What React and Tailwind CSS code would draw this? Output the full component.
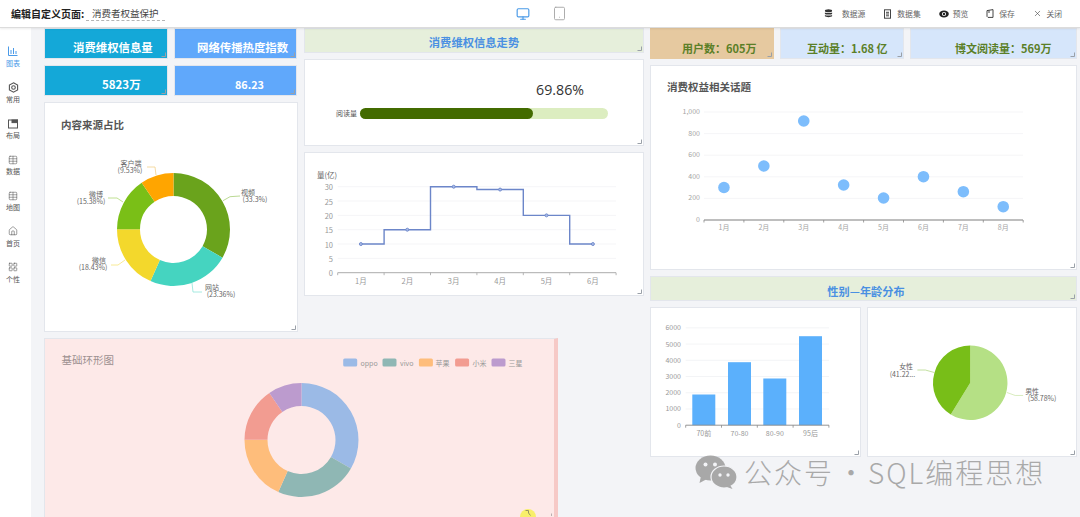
import React from 'react';
import { Table, House, LayoutGrid, Monitor, Tablet, X } from 'lucide-react';

const pt = (cx, cy, r, a) => [cx + r * Math.sin(a), cy - r * Math.cos(a)];
function Ring({ cx, cy, r, ir, data }) {
  const total = data.reduce((s, d) => s + d[0], 0);
  let acc = 0;
  return data.map(([v, c], i) => {
    const a0 = (acc / total) * Math.PI * 2;
    acc += v;
    const a1 = (acc / total) * Math.PI * 2;
    const big = a1 - a0 > Math.PI ? 1 : 0;
    const [x0, y0] = pt(cx, cy, r, a0);
    const [x1, y1] = pt(cx, cy, r, a1);
    const [x2, y2] = pt(cx, cy, ir, a1);
    const [x3, y3] = pt(cx, cy, ir, a0);
    const d = ir > 0
      ? `M${x0} ${y0}A${r} ${r} 0 ${big} 1 ${x1} ${y1}L${x2} ${y2}A${ir} ${ir} 0 ${big} 0 ${x3} ${y3}Z`
      : `M${cx} ${cy}L${x0} ${y0}A${r} ${r} 0 ${big} 1 ${x1} ${y1}Z`;
    return <path key={i} d={d} fill={c} />;
  });
}

const Handle = () => (
  <svg width="5" height="5" viewBox="0 0 5 5" className="absolute right-[1px] bottom-[1px]">
    <path d="M4.5 0.5V4.5H0.5" fill="none" stroke="#9aa0a8" strokeWidth="1" />
  </svg>
);

function Card({ className = '', children }) {
  return <div className={`relative shrink-0 border border-[#e3e6ec] ${className}`}>{children}<Handle /></div>;
}

function Plot({ x, y, w, h, children }) {
  return <svg viewBox={`${x + 1} ${y + 1} ${w - 2} ${h - 2}`} className="block w-full h-full">{children}</svg>;
}

const T = ({ x, y, s = 7.5, c = '#666', a = 'middle', w, children }) => (
  <text x={x} y={y} fontSize={s} fill={c} textAnchor={a} fontWeight={w} dominantBaseline="central">{children}</text>
);

const IconBars = () => (
  <svg width="10" height="10" viewBox="0 0 10 10" fill="none" stroke="currentColor" strokeWidth="1">
    <path d="M0.5 0.5V9.5H9.5" />
    <path d="M3 8V4M5.5 8V2M8 8V5" />
  </svg>
);
const IconGear = () => (
  <svg width="11" height="11" viewBox="0 0 11 11" fill="none" stroke="currentColor" strokeWidth="1.1">
    <path d="M5.5 0.8L9.6 3.1V7.9L5.5 10.2L1.4 7.9V3.1Z" />
    <circle cx="5.5" cy="5.5" r="1.8" />
  </svg>
);
const IconLayout = () => (
  <svg width="10" height="10" viewBox="0 0 10 10" fill="none" stroke="currentColor" strokeWidth="1">
    <rect x="0.5" y="1" width="9" height="8" />
    <rect x="4" y="1" width="5.5" height="2.6" fill="currentColor" />
  </svg>
);
const IconTable = () => <Table size={10} strokeWidth={1.3} />;
const IconHome = () => <House size={10} strokeWidth={1.4} />;
const IconGrid = () => <LayoutGrid size={10} strokeWidth={1.4} />;

const IconDb = () => (
  <svg width="9" height="9" viewBox="0 0 9 9" fill="#333">
    <ellipse cx="4.5" cy="1.8" rx="3.6" ry="1.5" />
    <path d="M0.9 3.5c.8.8 6.4.8 7.2 0v1.4c-.8.9-6.4.9-7.2 0z" />
    <path d="M0.9 6c.8.8 6.4.8 7.2 0v1.3c-.8 1.1-6.4 1.1-7.2 0z" />
  </svg>
);
const IconSet = () => (
  <svg width="9" height="10" viewBox="0 0 9 10" fill="none" stroke="#444" strokeWidth="1">
    <rect x="1.5" y="0.8" width="6" height="8.4" />
    <path d="M3 3.3H6M3 5H6M3 6.8H6" />
  </svg>
);
const IconEye = () => (
  <svg width="10" height="8" viewBox="0 0 10 8">
    <ellipse cx="5" cy="4" rx="4.8" ry="3.4" fill="#222" />
    <circle cx="5" cy="4" r="2.1" fill="#fff" />
    <circle cx="5" cy="4" r="1.2" fill="#222" />
  </svg>
);
const IconSave = () => (
  <svg width="8" height="9" viewBox="0 0 8 9" fill="none" stroke="#444" strokeWidth="1">
    <path d="M1 1.6L7 0.6V8.4H2L1 7.4Z" />
    <path d="M3 1.4V4" />
  </svg>
);
const IconX = () => <X size={9} strokeWidth={1.6} className="text-[#444]" />;

const side = [
  [IconBars, '图表', true],
  [IconGear, '常用'],
  [IconLayout, '布局'],
  [IconTable, '数据'],
  [IconTable, '地图'],
  [IconHome, '首页'],
  [IconGrid, '个性'],
];
const actions = [
  [IconDb, '数据源', 'gap-[8.5px]'],
  [IconSet, '数据集', 'gap-[5px]'],
  [IconEye, '预览', 'gap-[4px]'],
  [IconSave, '保存', 'gap-[5px]'],
  [IconX, '关闭', 'gap-[4.5px]'],
];

function Stat({ className, children }) {
  return <Card className={`h-[31px] flex items-end pb-[2px] font-bold ${className}`}>{children}</Card>;
}

const Label = ({ lines, x, y, line }) => (
  <g>
    <polyline points={line[0]} fill="none" stroke={line[1]} strokeWidth="0.8" />
    <text fontSize={7} fill="#666" textAnchor="middle" dominantBaseline="central">
      <tspan x={x[0]} y={y - 0.5}>{lines[0]}</tspan>
      <tspan x={x[1]} y={y + 7}>{lines[1]}</tspan>
    </text>
  </g>
);

function SourceChart() {
  return (
    <Plot x={44} y={102} w={254} h={230}>
      <T x={61} y={124} s={10.5} c="#555" a="start" w="700">内容来源占比</T>
      <Ring cx={173.5} cy={229.5} r={56.5} ir={33.5} data={[[33.3, '#6aa31c'], [23.36, '#45d4c0'], [18.43, '#f3d82c'], [15.38, '#7abf17'], [9.53, '#ffa500']]} />
      <Label lines={['视频', '(33.3%)']} x={[248, 255]} y={192} line={['223,200.7 230,196.7 240,196', '#a9cf79']} />
      <Label lines={['网站', '(23.36%)']} x={[212, 221]} y={287} line={['192,283 193,292 202,292', '#8fe5d9']} />
      <Label lines={['微信', '(18.43%)']} x={[99, 93]} y={260} line={['125,260 118,265 111,265', '#f6e57c']} />
      <Label lines={['微博', '(15.38%)']} x={[96, 91]} y={194} line={['123,202 117,198 108,198', '#b0d976']} />
      <Label lines={['客户端', '(9.53%)']} x={[131, 130]} y={163} line={['156,175 155,167 147,167', '#f3d28d']} />
    </Plot>
  );
}

function StepChart() {
  const x0 = 337.7, band = 46.4, y0 = 272.7, k = 86 / 30;
  const vals = [10, 15, 30, 29, 20, 10];
  const Y = (v) => y0 - v * k;
  let d = `M${x0 + band / 2} ${Y(10)}`;
  vals.forEach((v, i) => {
    if (i > 0) d += `V${Y(v)}`;
    d += `H${x0 + band * (i + (i === vals.length - 1 ? 0.5 : 1))}`;
  });
  return (
    <Plot x={304} y={152} w={340} h={144}>
      <T x={327} y={174} s={7.5} c="#666">量(亿)</T>
      {[5, 10, 15, 20, 25, 30].map((v) => <line key={v} x1={x0} x2={616} y1={Y(v)} y2={Y(v)} stroke="#f2f3f5" strokeWidth="0.8" />)}
      {[0, 5, 10, 15, 20, 25, 30].map((v) => <T key={v} x={333} y={Y(v)} s={7.5} c="#999" a="end">{v}</T>)}
      <line x1={x0} x2={616} y1={y0} y2={y0} stroke="#a3a3a3" strokeWidth="0.9" />
      {[0, 1, 2, 3, 4, 5, 6].map((i) => <line key={i} x1={x0 + band * i} x2={x0 + band * i} y1={y0} y2={y0 + 2.5} stroke="#a3a3a3" strokeWidth="0.8" />)}
      {vals.map((_, i) => <T key={i} x={x0 + band * (i + 0.5)} y={280} s={7.5} c="#999">{i + 1}月</T>)}
      <path d={d} fill="none" stroke="#6c86c9" strokeWidth="1.4" />
      {vals.map((v, i) => <circle key={i} cx={x0 + band * (i + 0.5)} cy={Y(v)} r="1.5" fill="#a9bce6" stroke="#6c86c9" strokeWidth="0.9" />)}
    </Plot>
  );
}

function ScatterChart() {
  const x0 = 704, band = 39.9, y0 = 220, unit = 21.6;
  const ys = [187.5, 166, 121, 185, 198, 176.7, 191.7, 206.7];
  return (
    <Plot x={650} y={65} w={427} h={205}>
      <T x={667} y={86} s={10.5} c="#555" a="start" w="700">消费权益相关话题</T>
      {[1, 2, 3, 4, 5].map((i) => <line key={i} x1={x0} x2={1023} y1={y0 - unit * i} y2={y0 - unit * i} stroke="#f2f3f5" strokeWidth="0.8" />)}
      {['0', '200', '400', '600', '800', '1,000'].map((l, i) => <T key={l} x={700} y={y0 - unit * i - 1} s={7} c="#a5a5a5" a="end">{l}</T>)}
      <line x1={x0} x2={1023} y1={y0} y2={y0} stroke="#a8a8a8" strokeWidth="1.4" />
      {Array.from({ length: 9 }).map((_, i) => <line key={i} x1={x0 + band * i} x2={x0 + band * i} y1={y0} y2={y0 + 2.5} stroke="#888" strokeWidth="0.8" />)}
      {ys.map((_, i) => <T key={i} x={x0 + band * (i + 0.5)} y={227} s={7} c="#a5a5a5">{i + 1}月</T>)}
      {ys.map((y, i) => <circle key={i} cx={x0 + band * (i + 0.5)} cy={y} r="5.8" fill="#7dbdfc" />)}
    </Plot>
  );
}

function BarChart() {
  const x0 = 685.7, x1 = 829, y0 = 425.7, unit = 16.23;
  const bars = [[692.3, 395, '70前'], [728, 362.7, '70-80'], [763.3, 379, '80-90'], [799, 336.7, '95后']];
  return (
    <Plot x={650} y={307.5} w={211} h={150}>
      {[1, 2, 3, 4, 5, 6].map((i) => <line key={i} x1={x0} x2={x1} y1={y0 - unit * i} y2={y0 - unit * i} stroke="#f0f1f4" strokeWidth="0.8" />)}
      {[0, 1000, 2000, 3000, 4000, 5000, 6000].map((v, i) => <T key={v} x={681} y={y0 - unit * i - 0.5} s={7} c="#999" a="end">{v}</T>)}
      {bars.map(([x, t]) => <rect key={x} x={x} y={t} width={23} height={y0 - t} fill="#5bb0fc" />)}
      <line x1={x0} x2={x1} y1={y0} y2={y0} stroke="#888" strokeWidth="0.9" />
      {[0, 1, 2, 3, 4].map((i) => <line key={i} x1={x0 + 35.8 * i} x2={x0 + 35.8 * i} y1={y0} y2={y0 + 2.5} stroke="#888" strokeWidth="0.8" />)}
      {bars.map(([x, , l]) => <T key={l} x={x + 11.5} y={433} s={7} c="#999">{l}</T>)}
    </Plot>
  );
}

function PieChart() {
  return (
    <Plot x={866.5} y={307.5} w={210.5} h={150}>
      <Ring cx={970} cy={383.3} r={37.3} ir={0} data={[[58.78, '#b5e085'], [41.22, '#78be18']]} />
      <Label lines={['女性', '(41.22...']} x={[905.7, 902]} y={367} line={['934,373 925,370.5 917,370.5', '#b5d98a']} />
      <Label lines={['男性', '(58.78%)']} x={[1032, 1042]} y={392} line={['1006.7,393 1015,396 1023,396', '#cfe7ae']} />
    </Plot>
  );
}

function PinkChart() {
  const legend = [
    [342.7, '#9bbae6', 360, 'oppo'],
    [382, '#8fb7b4', 399.5, 'vivo'],
    [418.4, '#febd7b', 435, '苹果'],
    [454.6, '#f29c91', 472, '小米'],
    [491, '#bc9bce', 508, '三星'],
  ];
  return (
    <Plot x={44} y={339} w={510} h={200}>
      <T x={61} y={360} s={10.5} c="#9c9090" a="start">基础环形图</T>
      {legend.map(([x, c, tx, l]) => (
        <g key={l}>
          <rect x={x} y={359.5} width={14} height={8} rx="1.5" fill={c} />
          <T x={tx} y={363.5} s={7} c="#999" a="start">{l}</T>
        </g>
      ))}
      <Ring cx={301} cy={441} r={57} ir={34} data={[[33.3, '#9bbae6'], [23.36, '#8fb7b4'], [18.43, '#febd7b'], [15.38, '#f29c91'], [9.53, '#bc9bce']]} />
      <line x1={551} x2={551} y1={514.5} y2={517} stroke="#a8a0a0" strokeWidth="0.8" />
    </Plot>
  );
}

const WeChat = () => (
  <svg width="42" height="34" viewBox="0 0 42 34" className="shrink-0">
    <ellipse cx="15.5" cy="13" rx="15" ry="12.5" fill="#a8a8a8" />
    <path d="M6 21l-1.5 7 7.5-4z" fill="#a8a8a8" />
    <circle cx="10.5" cy="9.5" r="2" fill="#f3f4f7" />
    <circle cx="20" cy="9.5" r="2" fill="#f3f4f7" />
    <ellipse cx="29" cy="22" rx="13" ry="11" fill="#a8a8a8" stroke="#f3f4f7" strokeWidth="1.2" />
    <path d="M35 30l2.5 4-7-2.5z" fill="#a8a8a8" />
    <circle cx="25" cy="20" r="1.7" fill="#f3f4f7" />
    <circle cx="33" cy="20" r="1.7" fill="#f3f4f7" />
  </svg>
);

export default function App() {
  return (
    <div className="relative flex flex-col w-[1080px] h-[517px] overflow-hidden bg-[#f3f4f7] font-['Noto_Sans_CJK_SC','Open_Sans',sans-serif]">
      <header className="relative z-10 flex items-center shrink-0 h-[28px] bg-white border-b border-[#dcdcdc] shadow-[0_1px_2px_rgba(0,0,0,0.08)]">
        <div className="flex items-center w-[480px] pl-[11px]">
          <span className="text-[10px] font-bold text-[#222] w-[75px]">编辑自定义页面:</span>
          <span className="text-[9.5px] text-[#444] px-[6px] border-b border-dashed border-[#b5b5b5] leading-[14px]">消费者权益保护</span>
        </div>
        <div className="flex items-center gap-[22px] ml-[36px]">
          <Monitor size={14} strokeWidth={2} className="text-[#4a9ae8]" />
          <Tablet size={15} strokeWidth={1.5} className="text-[#a8a8a8]" />
        </div>
        <div className="flex items-center ml-auto pr-[18px] gap-[18px]">
          {actions.map(([I, l, g]) => (
            <div key={l} className={`flex items-center text-[7.8px] text-[#666] ${g}`}>
              <I />
              <span>{l}</span>
            </div>
          ))}
        </div>
      </header>
      <div className="flex flex-1 min-h-0">
        <aside className="flex flex-col items-center shrink-0 w-[31px] pr-[5px] pt-[18px] gap-[14.4px] bg-white">
          {side.map(([I, l, on]) => (
            <div key={l} className={`flex flex-col items-center gap-[1.5px] leading-[10px] ${on ? 'text-[#4a9ae8]' : 'text-[#555]'}`}>
              <I />
              <span className="text-[7px] leading-[10px]">{l}</span>
            </div>
          ))}
        </aside>
        <main className="flex flex-1 min-w-0 pl-[13px] gap-[6px]">
          <div className="flex flex-col w-[600px] shrink-0">
            <div className="flex items-start gap-[6px]">
              <div className="flex flex-col gap-[6px] w-[254px]">
                <div className="flex gap-[6px]">
                  <Stat className="w-[124px] pl-[28px] bg-[#14a8d8] border-[#14a8d8] text-[11.4px] text-white">消费维权信息量</Stat>
                  <Stat className="w-[123px] pl-[22px] bg-[#60a8fb] border-[#60a8fb] text-[11.4px] text-white">网络传播热度指数</Stat>
                </div>
                <div className="flex gap-[6px]">
                  <Stat className="w-[124px] pl-[57px] bg-[#14a8d8] border-[#14a8d8] text-[11.5px] text-white">5823万</Stat>
                  <Stat className="w-[123px] pl-[60px] bg-[#60a8fb] border-[#60a8fb] text-[10.8px] text-white"><span className="mb-[1px]">86.23</span></Stat>
                </div>
                <Card className="w-[254px] h-[230px] bg-white"><SourceChart /></Card>
              </div>
              <div className="flex flex-col gap-[6px] w-[340px]">
                <Card className="flex items-end justify-center pb-[1px] h-[25px] bg-[#e6efdb] text-[11.3px] font-bold text-[#4a90e2]">消费维权信息走势</Card>
                <Card className="flex flex-col h-[87px] pl-[31px] pr-[35px] bg-white">
                  <div className="text-right pt-[18px] pr-[24px] text-[14.2px] leading-[24px] text-[#333] font-['Open_Sans',sans-serif]">69.86%</div>
                  <div className="flex items-center gap-[3px] mt-[6px]">
                    <span className="text-[7px] text-[#555] w-[21px] shrink-0">阅读量</span>
                    <div className="flex-1 h-[11px] rounded-full bg-[#dcedc0]">
                      <div className="h-full rounded-full bg-[#436b00]" style={{ width: '69.86%' }} />
                    </div>
                  </div>
                </Card>
                <Card className="h-[144px] bg-white"><StepChart /></Card>
              </div>
            </div>
            <Card className="w-[514px] h-[200px] mt-[6px] bg-[#fde9e8] border-r-[4px] border-r-[#f6c9c6]">
              <PinkChart />
              <span className="absolute left-[475px] top-[170px] w-[16px] h-[16px] rounded-full bg-[#f8ef6a]">
                <svg width="6" height="6" viewBox="0 0 6 6" className="absolute left-[5px] top-[1px]" fill="none" stroke="#9a9460" strokeWidth="1">
                  <path d="M0.5 0.5H3.5V3L5.5 5.5" />
                </svg>
              </span>
            </Card>
          </div>
          <div className="flex flex-col gap-[6px] w-[427px] shrink-0">
            <div className="flex gap-[6px]">
              <Stat className="w-[124px] pl-[31px] bg-[#e6c9a0] border-[#e6c9a0] text-[11px] text-[#5b7f27]">用户数：605万</Stat>
              <Stat className="w-[124px] pl-[26px] bg-[#d6e6fb] border-[#d6e6fb] text-[11px] text-[#5b7f27]">互动量：1.68 亿</Stat>
              <Stat className="w-[167px] pl-[44px] bg-[#d6e6fb] border-[#d6e6fb] text-[11px] text-[#5b7f27]">博文阅读量：569万</Stat>
            </div>
            <Card className="h-[205px] bg-white"><ScatterChart /></Card>
            <Card className="flex items-end justify-center pl-[5px] h-[25px] bg-[#e6efdb] text-[11.2px] font-bold text-[#4a90e2]">性别—年龄分布</Card>
            <div className="flex gap-[6px]">
              <Card className="w-[211px] h-[150px] bg-white"><BarChart /></Card>
              <Card className="w-[210px] h-[150px] bg-white"><PieChart /></Card>
            </div>
          </div>
        </main>
      </div>
      <div className="absolute left-[695px] top-[455px] flex items-center text-[28px] leading-[34px] font-light tracking-[2px] text-[#a9a9a9]">
        <WeChat />
        <span className="ml-[7px]">公众号</span>
        <span className="w-[34px] text-center tracking-normal">·</span>
        <span>SQL编程思想</span>
      </div>
    </div>
  );
}
